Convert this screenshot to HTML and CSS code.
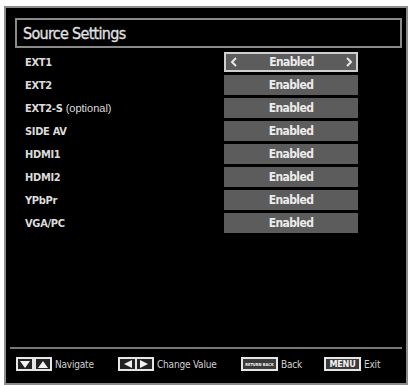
FILE: index.html
```html
<!DOCTYPE html>
<html lang="en">

<head>
    <meta charset="UTF-8">
    <title>Source Settings</title>
    <link rel="stylesheet" href="styles.css">
</head>

<body>
    <div class="screen">
        <div class="title">Source Settings</div>

        <div class="rows">
            <div class="row">
                <span class="label">EXT1</span>
                <span class="value active">
                    <svg class="chev" width="8" height="10" viewBox="0 0 8 10"><polyline points="6,1 2,5 6,9" fill="none" stroke="#e8e8e8" stroke-width="2"/></svg>
                    Enabled
                    <svg class="chev" width="8" height="10" viewBox="0 0 8 10"><polyline points="2,1 6,5 2,9" fill="none" stroke="#e8e8e8" stroke-width="2"/></svg>
                </span>
            </div>
            <div class="row">
                <span class="label">EXT2</span>
                <span class="value">Enabled</span>
            </div>
            <div class="row">
                <span class="label">EXT2-S <span class="note">(optional)</span></span>
                <span class="value">Enabled</span>
            </div>
            <div class="row">
                <span class="label">SIDE AV</span>
                <span class="value">Enabled</span>
            </div>
            <div class="row">
                <span class="label">HDMI1</span>
                <span class="value">Enabled</span>
            </div>
            <div class="row">
                <span class="label">HDMI2</span>
                <span class="value">Enabled</span>
            </div>
            <div class="row">
                <span class="label">YPbPr</span>
                <span class="value">Enabled</span>
            </div>
            <div class="row">
                <span class="label">VGA/PC</span>
                <span class="value">Enabled</span>
            </div>
        </div>

        <div class="footer">
            <div class="hint nav">
                <svg width="36" height="14" viewBox="0 0 36 14">
                    <rect x="1" y="1" width="16" height="12" fill="#222" stroke="#e6e6e6" stroke-width="2"/>
                    <rect x="19" y="1" width="16" height="12" fill="#222" stroke="#e6e6e6" stroke-width="2"/>
                    <polygon points="4,4 14,4 9,11" fill="#f2f2f2"/>
                    <polygon points="22,11 32,11 27,4" fill="#f2f2f2"/>
                </svg>
                <span>Navigate</span>
            </div>
            <div class="hint change">
                <svg width="36" height="14" viewBox="0 0 36 14">
                    <rect x="1" y="1" width="34" height="12" fill="#222" stroke="#e6e6e6" stroke-width="2"/>
                    <polygon points="14,3 14,11 6,7" fill="#f2f2f2"/>
                    <rect x="17" y="2" width="2" height="10" fill="#e6e6e6"/>
                    <polygon points="22,3 22,11 30,7" fill="#f2f2f2"/>
                </svg>
                <span>Change Value</span>
            </div>
            <div class="hint back">
                <span class="key small">RETURN BACK</span>
                <span>Back</span>
            </div>
            <div class="hint exit">
                <span class="key">MENU</span>
                <span>Exit</span>
            </div>
        </div>
    </div>
</body>

</html>
```

FILE: styles.css
```css
body {
    margin: 0;
    background-color: #fff;
    font-family: "DejaVu Sans Condensed", "DejaVu Sans", sans-serif;
    font-stretch: condensed;
}

.screen {
    margin: 6px 0 0 4px;
    width: 404px;
    height: 379px;
    box-sizing: border-box;
    border: 2px solid #8c8c8c;
    background-color: #000;
    padding: 10px 4px 0 9px;
    display: flex;
    flex-direction: column;
}

.title {
    height: 30px;
    box-sizing: border-box;
    border: 2px solid #8a8a8a;
    padding-left: 6px;
    display: flex;
    align-items: center;
    font-size: 16px;
    color: #e2e2e2;
    letter-spacing: -0.7px;
    -webkit-text-stroke: 0.3px #e2e2e2;
}

.rows {
    margin-top: 4px;
    display: flex;
    flex-direction: column;
    gap: 3px;
}

.row {
    display: flex;
    align-items: center;
    height: 20px;
}

.label {
    width: 199px;
    padding-left: 10px;
    font-size: 11px;
    font-weight: bold;
    color: #dcdcdc;
    letter-spacing: -0.3px;
}

.note {
    font-family: "Liberation Sans", Arial, sans-serif;
    font-weight: normal;
    font-size: 11px;
    letter-spacing: 0;
}

.value {
    width: 134px;
    height: 20px;
    box-sizing: border-box;
    background-color: #5c5c5c;
    color: #ececec;
    font-size: 12px;
    font-weight: bold;
    letter-spacing: -0.6px;
    display: flex;
    align-items: center;
    justify-content: center;
}

.value.active {
    border: 2px solid #cfcfcf;
    justify-content: space-between;
    padding: 0 3px 0 4px;
}

.chev {
    display: block;
}

.footer {
    margin: auto 0 0 -5px;
    border-top: 2px solid #777;
    padding: 8px 0 12px 6px;
    display: flex;
    align-items: center;
}

.hint {
    display: flex;
    align-items: center;
    gap: 3px;
    font-size: 10px;
    color: #d0d0d0;
    letter-spacing: -0.2px;
}

.hint svg {
    display: block;
}

.nav {
    width: 102px;
}

.change {
    width: 123px;
}

.back {
    width: 83px;
}

.key {
    width: 37px;
    height: 14px;
    box-sizing: border-box;
    border: 2px solid #e6e6e6;
    background-color: #3a3a3a;
    color: #f4f4f4;
    font-size: 9px;
    font-weight: bold;
    display: flex;
    align-items: center;
    justify-content: center;
}

.key.small {
    font-size: 4px;
    letter-spacing: 0;
}
```
